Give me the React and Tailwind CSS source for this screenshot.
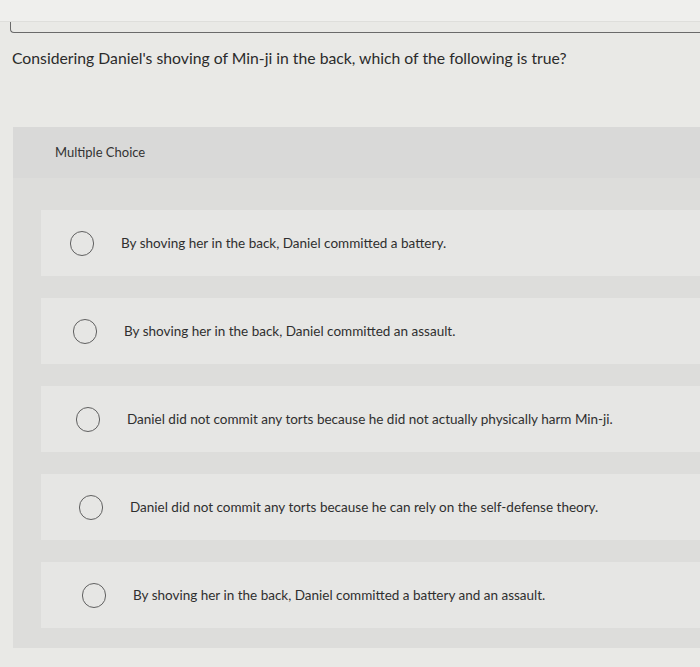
import React from "react";

const options = [
  { text: "By shoving her in the back, Daniel committed a battery.", pad: "pl-[29px]", mt: "mt-0" },
  { text: "By shoving her in the back, Daniel committed an assault.", pad: "pl-[32px]", mt: "mt-[22px]" },
  { text: "Daniel did not commit any torts because he did not actually physically harm Min-ji.", pad: "pl-[35px]", mt: "mt-[22px]" },
  { text: "Daniel did not commit any torts because he can rely on the self-defense theory.", pad: "pl-[38px]", mt: "mt-[22px]" },
  { text: "By shoving her in the back, Daniel committed a battery and an assault.", pad: "pl-[41px]", mt: "mt-[22px]" },
];

function Radio() {
  return (
    <span className="block w-[24px] h-[25px] shrink-0 rounded-full border-[1.5px] border-[#606060]" />
  );
}

export default function App() {
  return (
    <div className="min-h-screen bg-[#e9e9e6] text-[#2f2f2f]" style={{ fontFamily: "Lato, 'Liberation Sans', sans-serif" }}>
      <div className="h-[22px] bg-[#efefed] border-b border-[#dededb]" />
      <div className="ml-[10px] h-[11px] border-l-[1.5px] border-b-[1.5px] border-[#6a6a6a] rounded-bl-[4px]" />

      <h1 className="mt-[14px] pl-[12px] text-[15.75px] leading-[22px] font-normal text-[#2b2b2b]">
        Considering Daniel's shoving of Min-ji in the back, which of the following is true?
      </h1>

      <div className="mt-[58px] ml-[13px] bg-[#dddddb] pb-[20px]">
        <div className="h-[51px] flex items-center pl-[42px] bg-[#d9d9d8]">
          <span className="text-[13px] text-[#333]">Multiple Choice</span>
        </div>
        <div className="pt-[32px] pl-[28px]">
          {options.map((o) => (
            <div key={o.text} className={`${o.mt} h-[66px] bg-[#e6e6e4] flex items-center ${o.pad}`}>
              <Radio />
              <span className="ml-[27px] text-[13.5px] text-[#2f2f2f]">{o.text}</span>
            </div>
          ))}
        </div>
      </div>
    </div>
  );
}
